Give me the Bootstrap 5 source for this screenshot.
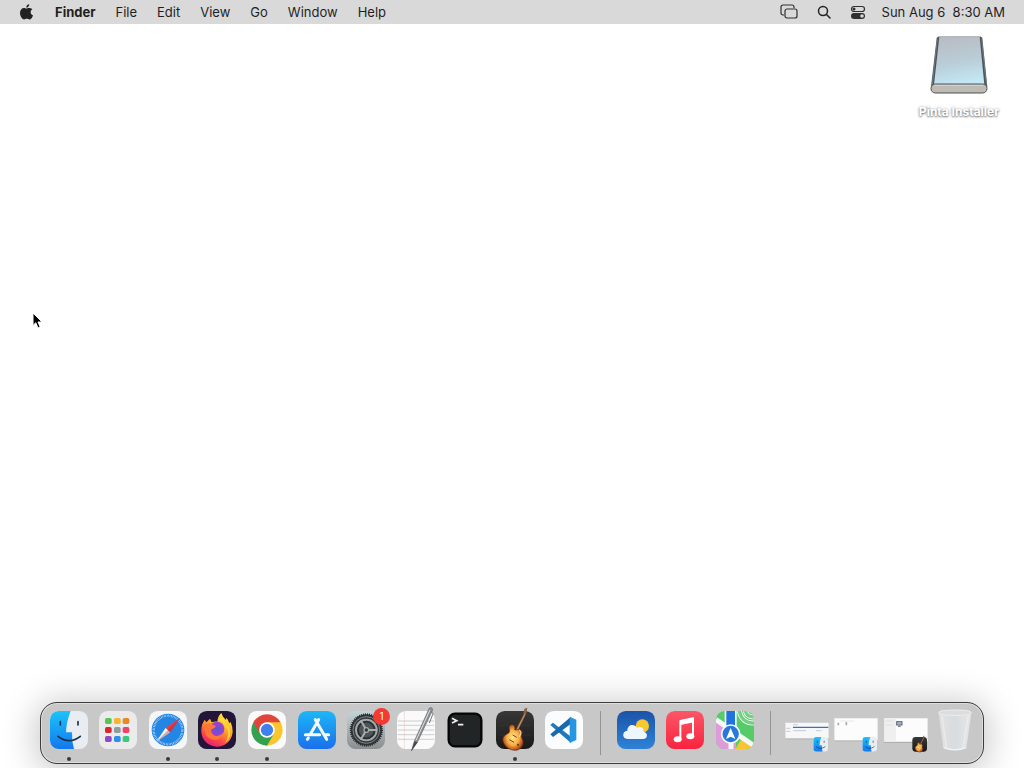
<!DOCTYPE html>
<html lang="en">
<head>
<meta charset="utf-8">
<meta name="viewport" content="width=device-width, initial-scale=1">
<title>Finder</title>
<link href="https://cdn.jsdelivr.net/npm/bootstrap@5.3.0/dist/css/bootstrap.min.css" rel="stylesheet">
<style>
  body { font-family: Inter, "Liberation Sans", sans-serif; font-size: 13px; line-height: 16px; color: #1f1f1f; background: #fff; cursor: default; overflow: hidden; }
  button { border: 0; padding: 0; background: none; color: inherit; }
  svg { display: block; overflow: visible; }
  .menubar { height: 24px; background: #d9d9d9; padding: 0 19px 1px 20px; }
  .menus { gap: 20px; }
  .system { width: 15px; }
  .status { gap: 18px; }
  .clock { white-space: pre; margin-left: -2px; }
  .volume { width: 92px; margin: 12px 19px 0 0; }
  .volume-name { font-size: 12px; font-weight: 700; color: #fff; text-shadow: 0 1px 2px rgba(0,0,0,.5), 0 0 3px rgba(0,0,0,.3); margin-top: 10px; white-space: nowrap; }
  .pointer { position: absolute; left: 32px; top: 312px; }
  .dock { width: 92.2%; height: 62px; margin-bottom: 4px; padding: 0 3px; background: #c8c8c8; border: 1px solid #3c3c3c; border-radius: 17px;
          box-shadow: inset 0 0 0 1px #dedede, 0 4px 34px 4px rgba(0,0,0,.22); }
  .app { flex: 1 1 0; min-width: 0; height: 60px; position: relative; display: flex; justify-content: center; padding-top: 8px; }
  .app svg { width: 38px; height: 38px; }
  .running::after { content: ""; position: absolute; bottom: 2px; width: 4px; height: 4px; border-radius: 50%; background: #3a3a3a; }
  .divider { flex: 0 0 22px; display: flex; justify-content: center; }
  .divider::before { content: ""; width: 1px; height: 44px; background: #939393; }
  .notice { position: absolute; left: 50%; top: 5px; margin-left: 7px; width: 17px; height: 17px; font-size: 10px; line-height: 17px; color: #fff; background: #f23b32; border-radius: 50%; }
</style>
</head>
<body class="d-flex flex-column min-vh-100">

<svg width="0" height="0" class="position-absolute" aria-hidden="true">
  <defs>
    <linearGradient id="blueSky" x2="0" y2="1"><stop stop-color="#1cc3fb"/><stop offset="1" stop-color="#1477ee"/></linearGradient>
    <linearGradient id="store" x2="0" y2="1"><stop stop-color="#1eb6f8"/><stop offset="1" stop-color="#1a70ea"/></linearGradient>
    <linearGradient id="sky" x2="0" y2="1"><stop stop-color="#1b53a8"/><stop offset="1" stop-color="#2e83d6"/></linearGradient>
    <linearGradient id="music" x2="0" y2="1"><stop stop-color="#fb5766"/><stop offset="1" stop-color="#f9233f"/></linearGradient>
    <linearGradient id="steel" x2="0" y2="1"><stop stop-color="#c3d5da"/><stop offset="1" stop-color="#8b8d8f"/></linearGradient>
    <linearGradient id="flame" x1=".8" y1="0" x2=".3" y2="1"><stop stop-color="#fff04a"/><stop offset=".4" stop-color="#ffad27"/><stop offset=".75" stop-color="#ff4a45"/><stop offset="1" stop-color="#e9197c"/></linearGradient>
    <radialGradient id="orb"><stop stop-color="#5d55d8"/><stop offset="1" stop-color="#a33fc8"/></radialGradient>
    <radialGradient id="wood"><stop stop-color="#ffe888"/><stop offset=".6" stop-color="#f8ad45"/><stop offset="1" stop-color="#b04a18"/></radialGradient>
    <linearGradient id="charcoal" x2="0" y2="1"><stop stop-color="#373737"/><stop offset="1" stop-color="#191919"/></linearGradient>
    <linearGradient id="drive" x1=".3" x2=".5" y2="1"><stop stop-color="#b9bcc4"/><stop offset=".55" stop-color="#b9ced8"/><stop offset="1" stop-color="#c4e8f6"/></linearGradient>
    <linearGradient id="bin" x2="1" y2="0"><stop stop-color="#e2e2e2"/><stop offset=".5" stop-color="#d8dcdf"/><stop offset="1" stop-color="#e6e6e6"/></linearGradient>
    <clipPath id="tile"><rect width="114" height="114" rx="26"/></clipPath>
    <filter id="soft" x="-20%" y="-20%" width="140%" height="140%"><feDropShadow dx="0" dy="2" stdDeviation="2" flood-opacity=".25"/></filter>
    <symbol id="finder" viewBox="0 0 114 114">
      <g clip-path="url(#tile)">
        <rect width="114" height="114" fill="#e9ecf1"/>
        <path d="M0 0H62Q49 33 48 64H66Q65 90 72 114H0Z" fill="url(#blueSky)"/>
      </g>
      <path d="M31 32V42M84 32V42" stroke="#17324a" stroke-width="5" stroke-linecap="round"/>
      <path d="M24 76Q57 102 91 76" fill="none" stroke="#17324a" stroke-width="5" stroke-linecap="round"/>
    </symbol>
    <symbol id="guitar" viewBox="0 0 114 114" overflow="visible">
      <rect width="114" height="114" rx="26" fill="url(#charcoal)"/>
      <path d="M8 44H106M8 72H106" stroke="#464646" stroke-width="1"/>
      <path d="M58 66L86 8" stroke="#4b3022" stroke-width="10"/>
      <path d="M59 65L87 9" stroke="#b98e63" stroke-width="5"/>
      <path d="M82 10L85-7L94-10L90 12Z" fill="#83644a"/>
      <path d="M44 42C53 38 59 46 56 56C56 60 68 52 76 58C83 64 73 74 78 82C86 94 80 110 67 116C50 123 26 110 21 92C17 77 28 72 38 66C45 60 34 48 44 42Z" fill="url(#wood)" stroke="#592711" stroke-width="2"/>
      <path d="M40 86L54 94M50 72L62 79" stroke="#7d421d" stroke-width="3"/>
      <path d="M70 56L75 66L70 78" fill="none" stroke="#f3dfb4" stroke-width="3"/>
      <circle cx="66" cy="101" r="3" fill="#623015"/>
    </symbol>
  </defs>
</svg>

<nav class="menubar d-flex justify-content-between align-items-center" aria-label="Menu bar">
  <div class="menus d-flex align-items-center">
    <button type="button" class="system" aria-label="System menu">
      <svg width="13" height="16" viewBox="0 0 38 46" fill="#222"><path d="M31 24C31 18 36 15 36 15C33 11 28 11 26 11C23 11 21 13 19 13C17 13 14 11 12 11C5 11 0 17 0 26C0 35 7 45 12 45C15 45 16 43 20 43C23 43 25 45 28 45C33 45 37 36 38 33C34 31 31 29 31 24Z"/><path d="M18 10C18 5 22 0 27 0C28 5 23 10 18 10Z"/></svg>
    </button>
    <button type="button" class="fw-bold">Finder</button>
    <button type="button">File</button>
    <button type="button">Edit</button>
    <button type="button">View</button>
    <button type="button">Go</button>
    <button type="button">Window</button>
    <button type="button">Help</button>
  </div>
  <div class="status d-flex align-items-center">
    <button type="button" aria-label="Stage windows">
      <svg width="19" height="16" viewBox="0 0 19 16" fill="none" stroke="#303030" stroke-width="1.200"><path d="M5 11H4A2 2 0 0 1 2 9V3A2 2 0 0 1 4 1H13A2 2 0 0 1 15 3V4"/><rect x="6" y="5" width="12" height="9" rx="2"/></svg>
    </button>
    <button type="button" aria-label="Search">
      <svg width="16" height="16" viewBox="0 0 16 16" fill="none" stroke="#222" stroke-width="1.500" stroke-linecap="round"><circle cx="7" cy="7" r="4.500"/><path d="M10.500 10.500L14 14"/></svg>
    </button>
    <button type="button" aria-label="Control Center">
      <svg width="16" height="16" viewBox="0 0 16 16"><rect x="1.500" y="2.500" width="13" height="5" rx="2.500" fill="none" stroke="#303030" stroke-width="1.200"/><circle cx="4" cy="5" r="1.500" fill="#303030"/><rect x="1" y="9" width="14" height="6" rx="3" fill="#303030"/><circle cx="12" cy="12" r="1.800" fill="#d9d9d9"/></svg>
    </button>
    <time class="clock">Sun Aug 6  8:30 AM</time>
  </div>
</nav>

<main class="flex-grow-1 d-flex justify-content-end align-items-start">
  <button type="button" class="volume d-flex flex-column align-items-center">
    <svg width="58" height="58" viewBox="0 0 174 174">
      <path d="M20 7Q20 2 26 2H151Q157 2 157 7L172 152H3Z" fill="#4a555b"/>
      <path d="M28 3H149L163 146H12Z" fill="url(#drive)"/>
      <path d="M22 8L7 146M155 8L169 146" stroke="#7f8b92" stroke-width="2"/>
      <path d="M24 2H153" stroke="#a0a5a9" stroke-width="2"/>
      <rect x="3" y="144" width="168" height="27" rx="13" fill="#bdbbb4" stroke="#4a5154" stroke-width="3"/>
      <path d="M13 148H160" stroke="#e1e5e3" stroke-width="2"/>
    </svg>
    <span class="volume-name">Pinta Installer</span>
  </button>
</main>

<svg class="pointer" width="12" height="18" viewBox="0 0 12 18" aria-hidden="true"><path d="M1 1V13.500L3.800 10.800L6 16L8.200 15L6 10H10Z" fill="#000" stroke="#fff" stroke-width="1"/></svg>

<footer class="dock d-flex align-items-center mx-auto" aria-label="Dock">
  <button type="button" class="app running" aria-label="Finder"><svg><use href="#finder"/></svg></button>
  <button type="button" class="app" aria-label="Launchpad">
    <svg viewBox="0 0 114 114"><rect width="114" height="114" rx="26" fill="#ebebeb"/>
      <g><rect x="18" y="21" width="20" height="18" rx="5" fill="#55c654"/><rect x="45" y="21" width="20" height="18" rx="5" fill="#f5b52f"/><rect x="71" y="21" width="20" height="18" rx="5" fill="#e88924"/>
      <rect x="18" y="48" width="20" height="18" rx="5" fill="#dc242e"/><rect x="45" y="48" width="20" height="18" rx="5" fill="#8a9d9f"/><rect x="71" y="48" width="20" height="18" rx="5" fill="#f24269"/>
      <rect x="18" y="75" width="20" height="18" rx="5" fill="#9248c4"/><rect x="45" y="75" width="20" height="18" rx="5" fill="#2e8fed"/><rect x="71" y="75" width="20" height="18" rx="5" fill="#3cc77d"/></g></svg>
  </button>
  <button type="button" class="app running" aria-label="Safari">
    <svg viewBox="0 0 114 114"><rect width="114" height="114" rx="26" fill="#f5f6f7"/><circle cx="57" cy="57" r="49" fill="#2385e4"/><circle cx="57" cy="57" r="43" fill="none" stroke="#dceeff" stroke-width="7" stroke-dasharray="1.500 3"/>
      <path d="M21 93L50 50L64 64Z" fill="#f3f5f8"/><path d="M93 21L50 50L64 64Z" fill="#ee3a43"/><path d="M21 93L93 21L64 64Z" fill="#8c2644" opacity=".35"/></svg>
  </button>
  <button type="button" class="app running" aria-label="Firefox">
    <svg viewBox="0 0 114 114"><rect width="114" height="114" rx="26" fill="#21163a"/>
      <path d="M13 39L20 26L25 34L36 23L41 34Q50 31 58 32Q59 16 70 6Q74 20 84 27L85 20Q91 26 94 37L98 33Q111 65 96 87Q80 108 55 107Q26 104 14 80Q6 59 13 39Z" fill="url(#flame)"/>
      <path d="M62 27Q76 13 78 23Q80 38 93 48Q105 79 81 97Q100 65 82 45Q76 31 62 27Z" fill="#ffdd38" opacity=".85"/>
      <circle cx="57" cy="54" r="22" fill="url(#orb)"/>
      <path d="M18 42Q35 32 46 42L54 45Q50 53 40 55Q36 67 50 74Q65 78 73 67Q70 86 49 87Q24 84 20 61Z" fill="#ff7636"/></svg>
  </button>
  <button type="button" class="app running" aria-label="Chrome">
    <svg viewBox="0 0 114 114"><rect width="114" height="114" rx="26" fill="#fafafa"/>
      <path d="M57 57L16.300 33.500A47 47 0 0 1 97.700 33.500Z" fill="#e2433a"/><path d="M57 57L97.700 33.500A47 47 0 0 1 57 104Z" fill="#fbc62d"/><path d="M57 57L57 104A47 47 0 0 1 16.300 33.500Z" fill="#35a04f"/>
      <path d="M57 33.500H97.700L77.400 68.700Z" fill="#fbc62d"/><path d="M77.400 68.700L57 104L36.600 68.700Z" fill="#35a04f"/><path d="M36.600 68.700L16.300 33.500H57Z" fill="#e2433a"/>
      <circle cx="57" cy="57" r="23.500" fill="#fff"/><circle cx="57" cy="57" r="18.500" fill="#3f80ed"/></svg>
  </button>
  <button type="button" class="app" aria-label="App Store">
    <svg viewBox="0 0 114 114"><rect width="114" height="114" rx="26" fill="url(#store)"/><g fill="none" stroke="#f3faff" stroke-width="9" stroke-linecap="round"><path d="M62 26L36 71M52 26L86 85M22 71H65M81 71H92M31 81L28 85"/></g></svg>
  </button>
  <button type="button" class="app" aria-label="System Settings, 1 notification">
    <svg viewBox="0 0 114 114"><rect width="114" height="114" rx="26" fill="url(#steel)"/>
      <circle cx="58" cy="57" r="47" fill="#34383b"/><circle cx="58" cy="57" r="47" fill="none" stroke="#26292b" stroke-width="6" stroke-dasharray="3 3"/><circle cx="58" cy="57" r="40" fill="none" stroke="#7d8485" stroke-width="3"/><circle cx="58" cy="57" r="31" fill="#4e5556" stroke="#a3a9aa" stroke-width="6"/><circle cx="58" cy="57" r="25" fill="none" stroke="#292d30" stroke-width="5"/>
      <g stroke="#a8aeae" stroke-width="6"><path d="M58 57H91M58 57L41 28M58 57L41 86"/></g><circle cx="58" cy="57" r="7" fill="#303437" stroke="#a6acad" stroke-width="4"/></svg>
    <span class="notice">1</span>
  </button>
  <button type="button" class="app" aria-label="TextEdit">
    <svg viewBox="0 0 114 114"><rect width="114" height="114" rx="26" fill="#fafafa"/><path d="M2 30H112M2 43H112M2 57H112M2 71H112M2 85H112" stroke="#b9b9b9" stroke-width="2"/><path d="M22 1V113" stroke="#e2aaa9" stroke-width="1"/>
      <path d="M97-9Q106-14 107-3L62 92L43 120L53 88Z" fill="#8b8e92" stroke="#595c60" stroke-width="1.500"/><path d="M99-3L57 88" stroke="#e0e1e3" stroke-width="3"/><path d="M103 2L108 8L97 36" fill="none" stroke="#5d6063" stroke-width="2.500"/><path d="M52 91L62 94L43 120Z" fill="#4b4b4d"/></svg>
  </button>
  <button type="button" class="app" aria-label="Terminal">
    <svg viewBox="0 0 114 114"><rect x="8" y="8" width="98" height="98" rx="19" fill="#222526" stroke="#050505" stroke-width="7"/><path d="M18 22L32 29L18 36M36 41H52" fill="none" stroke="#f0f0f0" stroke-width="5"/></svg>
  </button>
  <button type="button" class="app running" aria-label="GarageBand"><svg><use href="#guitar"/></svg></button>
  <button type="button" class="app" aria-label="Visual Studio Code">
    <svg viewBox="0 0 114 114"><rect width="114" height="114" rx="26" fill="#fbfcfd"/><path d="M16 42L24 35L78 77V96Z" fill="#1e79bc"/><path d="M16 70L78 17V38L24 78Z" fill="#1768ac"/><path d="M74 17L94 26V87L74 96Z" fill="#2695e4"/></svg>
  </button>
  <span class="divider"></span>
  <button type="button" class="app" aria-label="Weather">
    <svg viewBox="0 0 114 114"><rect width="114" height="114" rx="26" fill="url(#sky)"/><circle cx="76" cy="45" r="20" fill="#fbc72e"/><path d="M34 84C14 84 14 61 31 59C31 40 52 37 60 50C72 45 81 52 80 62C95 66 92 84 78 84Z" fill="#eef6ff"/></svg>
  </button>
  <button type="button" class="app" aria-label="Music">
    <svg viewBox="0 0 114 114"><rect width="114" height="114" rx="26" fill="url(#music)"/><path d="M43 83V30L81 22V74" fill="none" stroke="#fff" stroke-width="6" stroke-linejoin="round"/><path d="M43 28L84 20V34L43 42Z" fill="#fff"/><ellipse cx="35" cy="85" rx="12" ry="9" fill="#fff"/><ellipse cx="73" cy="76" rx="12" ry="9" fill="#fff"/></svg>
  </button>
  <button type="button" class="app" aria-label="Maps">
    <svg viewBox="0 0 114 114"><g clip-path="url(#tile)"><rect width="114" height="114" fill="#56cc68"/><path d="M0 22L60 70V114H0Z" fill="#df9bd9"/><path d="M58 114L76 84L114 107V114Z" fill="#f5c534"/><path d="M0 26L114 104M45 114V75M70 0Q78 39 118 36M88 0Q92 18 114 18" fill="none" stroke="#f6f8f5" stroke-width="15"/><path d="M70 0Q78 39 118 36M88 0Q92 18 114 18" fill="none" stroke="#6fd281" stroke-width="10"/><path d="M26 0H62V52H26Z" fill="#f5f8fb"/><path d="M31 0H57V52H31Z" fill="#2172e0"/></g>
      <circle cx="44" cy="69" r="27" fill="#2878d9" stroke="#f4f7fb" stroke-width="5"/><path d="M44 51L58 84L44 77L30 84Z" fill="#fff"/></svg>
  </button>
  <span class="divider"></span>
  <button type="button" class="app" aria-label="Minimized Finder window 1">
    <svg viewBox="0 0 114 114"><g filter="url(#soft)"><path d="M-8 35H122V82H-8Z" fill="#f7f7f7"/></g><path d="M15 49H121" stroke="#3972c4" stroke-width="4"/><path d="M15 41H30M16 59H54M-5 52H7M-5 61H7M84 59H101" stroke="#a8b7cc" stroke-width="2"/><use href="#finder" x="76" y="78" width="44" height="44"/></svg>
  </button>
  <button type="button" class="app" aria-label="Minimized Finder window 2">
    <svg viewBox="0 0 114 114"><g filter="url(#soft)"><path d="M-8 22H122V88H-8Z" fill="#fcfcfc"/></g><path d="M4 35V43M28 33V43" stroke="#aaa" stroke-width="5"/><path d="M10 30H52" stroke="#dedede" stroke-width="2"/><use href="#finder" x="76" y="78" width="44" height="44"/></svg>
  </button>
  <button type="button" class="app" aria-label="Minimized GarageBand window">
    <svg viewBox="0 0 114 114"><g filter="url(#soft)"><path d="M-8 22H122V92H-8Z" fill="#fcfcfc"/></g><path d="M-8 22H27V92H-8Z" fill="#efefef"/><path d="M-5 30H18M-5 42H18" stroke="#dadada" stroke-width="2"/><rect x="29" y="32" width="16" height="10" fill="#a9b6c8" stroke="#596579" stroke-width="3"/><path d="M33 46H41" stroke="#596579" stroke-width="3"/><use href="#guitar" x="76" y="78" width="44" height="44"/></svg>
  </button>
  <button type="button" class="app" aria-label="Trash">
    <svg viewBox="0 0 114 114"><path d="M8 4L22 111Q57 124 91 111L106 4Z" fill="url(#bin)"/><path d="M18 15L31 108M96 15L82 108" stroke="#eee" stroke-width="5" opacity=".7"/><path d="M8 5Q8-3 57-3Q106-3 106 5Q106 13 57 13Q8 13 8 5Z" fill="#dcdddd" stroke="#ededed" stroke-width="3"/><path d="M23 110Q57 123 90 110" fill="none" stroke="#f3f3f3" stroke-width="4"/></svg>
  </button>
</footer>

<script src="https://cdn.jsdelivr.net/npm/bootstrap@5.3.0/dist/js/bootstrap.bundle.min.js"></script>
</body>
</html>
